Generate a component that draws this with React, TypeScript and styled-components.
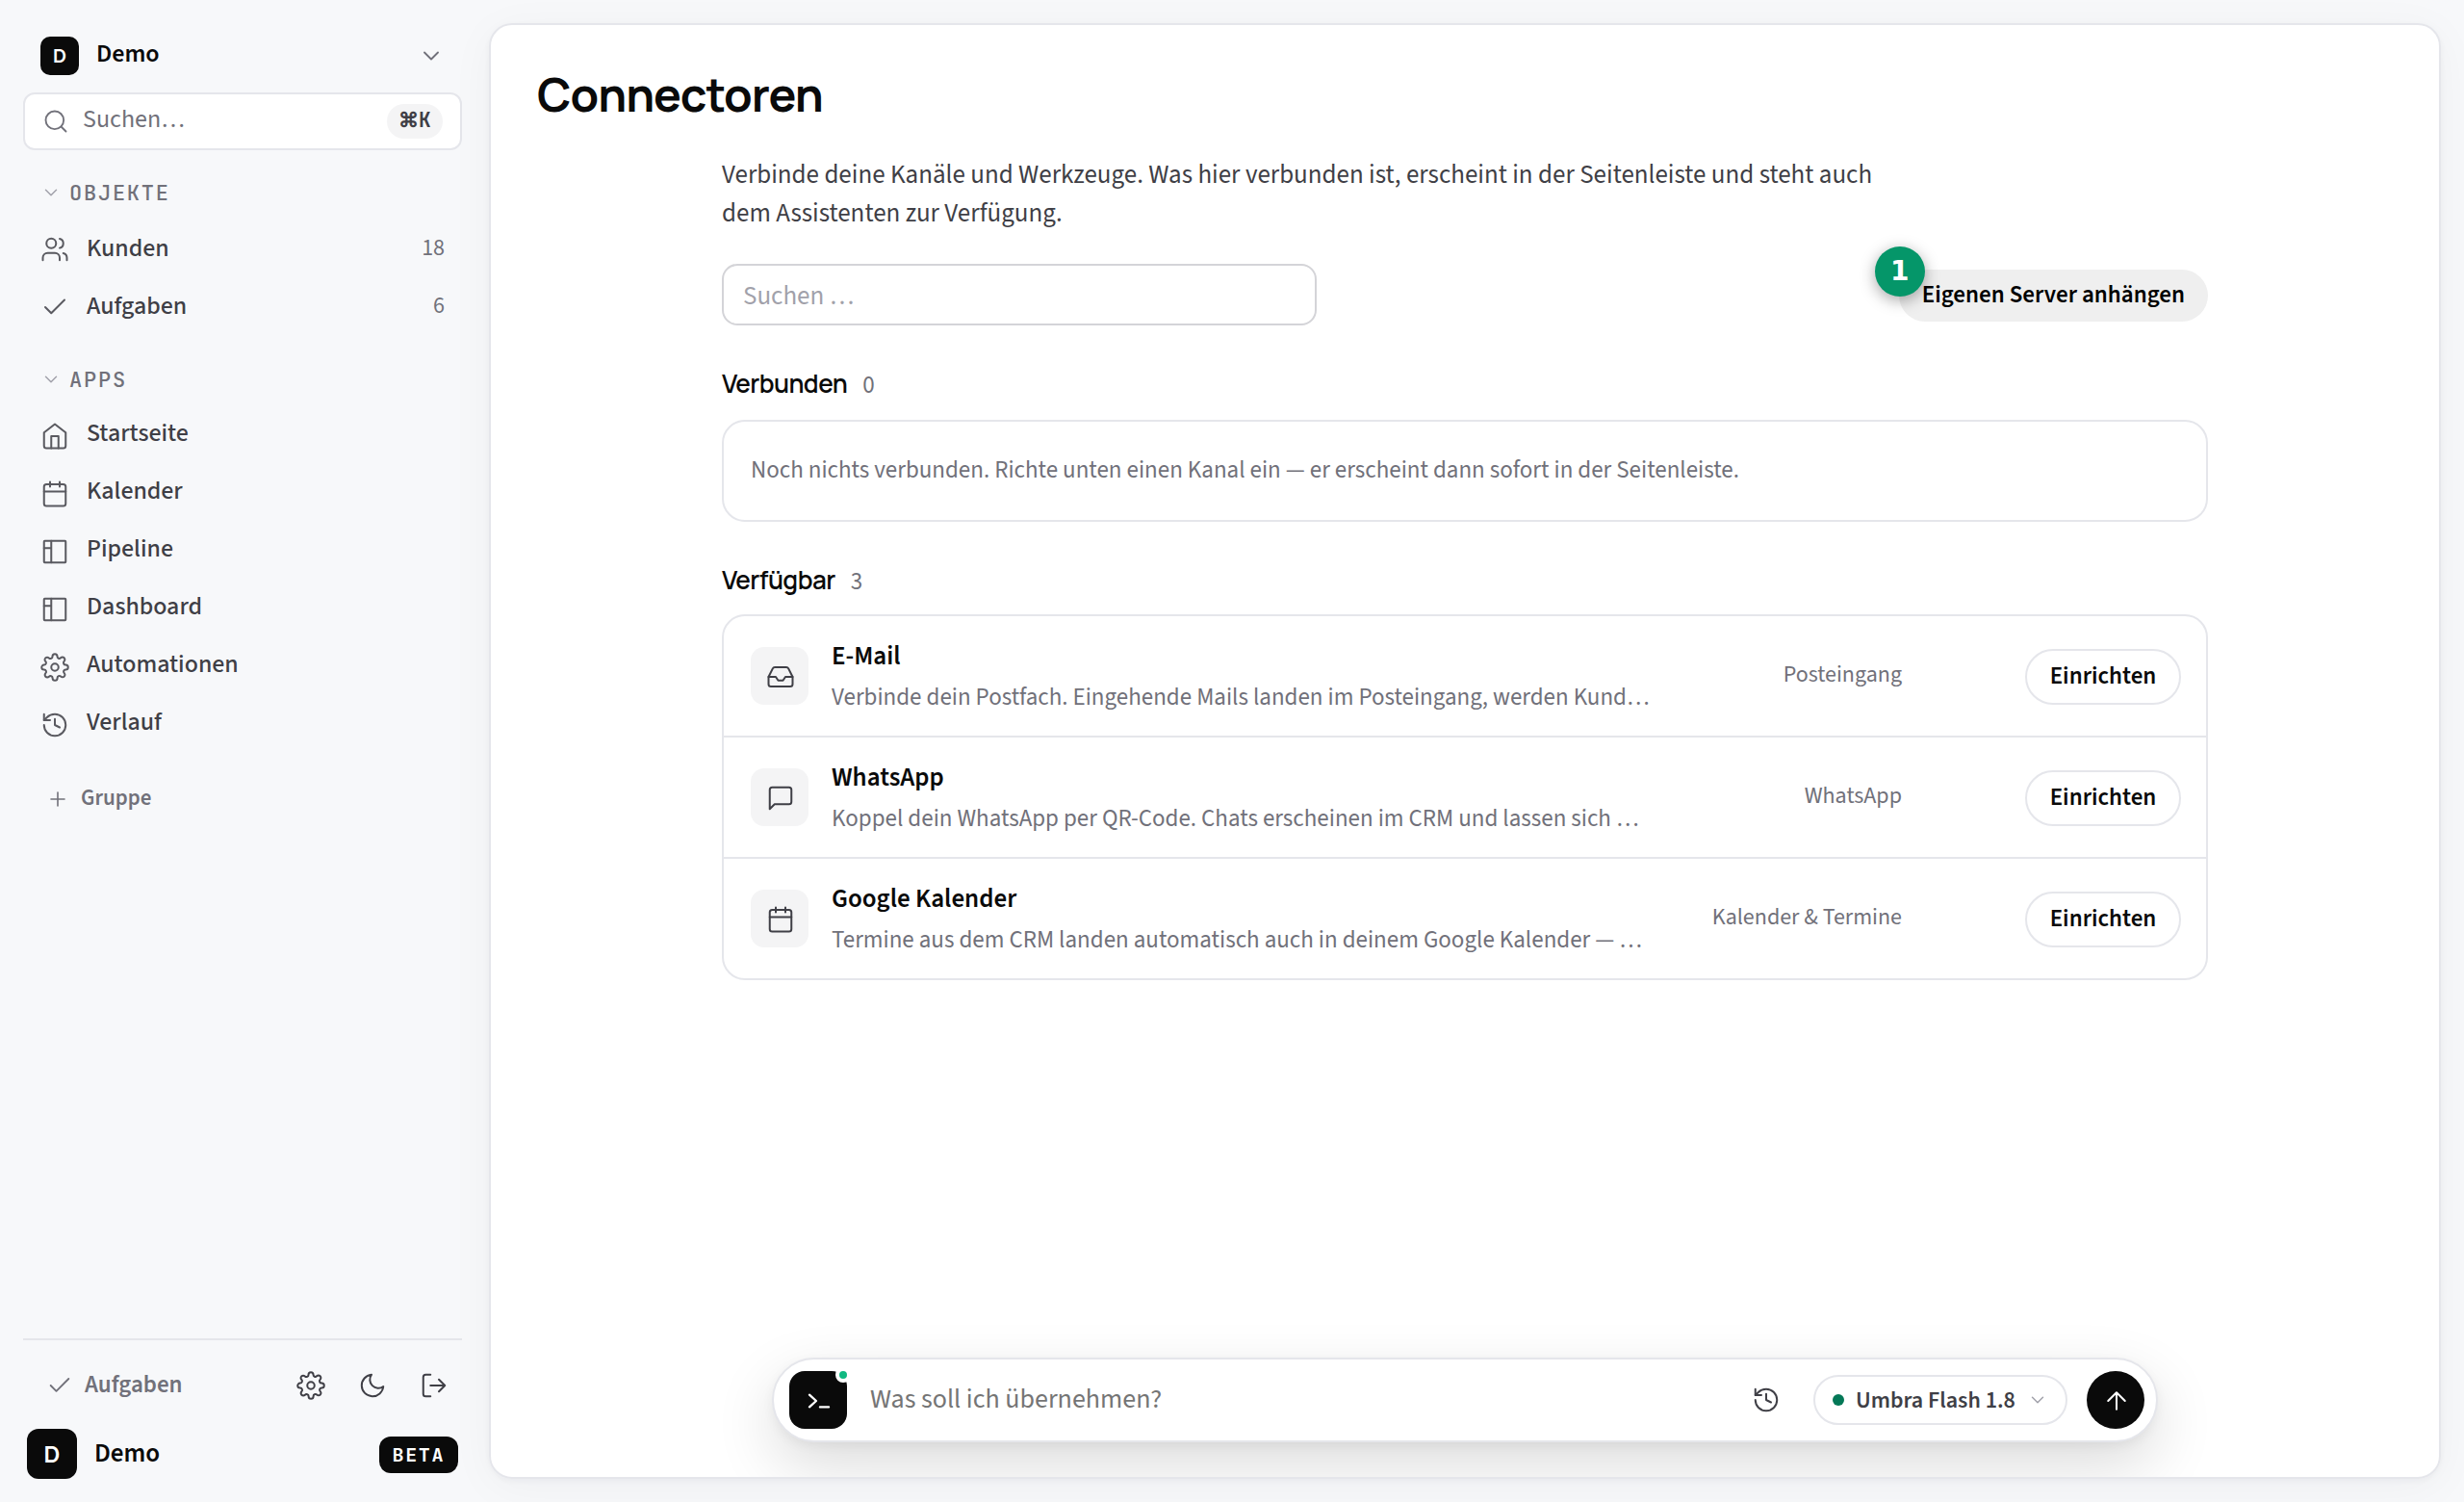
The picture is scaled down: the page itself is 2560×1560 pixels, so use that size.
import React from "react";
import styled, { createGlobalStyle } from "styled-components";

const sans = '"Source Sans 3", "Noto Sans CJK SC", sans-serif';
const display = 'Manrope, Inter, sans-serif';
const mono = '"JetBrains Mono", "Liberation Mono", monospace';
const c = { bg: "#f7f8fa", ink: "#0a0a0a", body: "#3f3f46", muted: "#71717a", faint: "#a1a1aa", line: "#e5e6eb", soft: "#f4f4f5" };

const Global = createGlobalStyle`
  *, *::before, *::after { box-sizing: border-box; }
  body { margin: 0; background: ${c.bg}; font-family: ${sans}; color: ${c.ink}; }
  button, input { font-family: inherit; margin: 0; }
  svg { display: block; flex: none; }
`;

const paths: Record<string, React.ReactNode> = {
  chevron: <path d="m6 9 6 6 6-6" />,
  search: <><circle cx="11" cy="11" r="8" /><path d="m21 21-4.3-4.3" /></>,
  users: <><path d="M16 21v-2a4 4 0 0 0-4-4H6a4 4 0 0 0-4 4v2" /><circle cx="9" cy="7" r="4" /><path d="M22 21v-2a4 4 0 0 0-3-3.87" /><path d="M16 3.13a4 4 0 0 1 0 7.75" /></>,
  check: <path d="M20 6 9 17l-5-5" />,
  home: <><path d="m3 9 9-7 9 7v11a2 2 0 0 1-2 2H5a2 2 0 0 1-2-2z" /><path d="M9 22V12h6v10" /></>,
  calendar: <><rect x="3" y="4" width="18" height="18" rx="2" /><path d="M16 2v4M8 2v4M3 10h18" /></>,
  board: <><rect x="3" y="3" width="18" height="18" rx=".6" /><path d="M9 3v18M3 9h6" /></>,
  gear: <><circle cx="12" cy="12" r="3" /><path d="M19.4 15a1.65 1.65 0 0 0 .33 1.82l.06.06a2 2 0 0 1 0 2.83 2 2 0 0 1-2.83 0l-.06-.06a1.65 1.65 0 0 0-1.82-.33 1.65 1.65 0 0 0-1 1.51V21a2 2 0 0 1-2 2 2 2 0 0 1-2-2v-.09A1.65 1.65 0 0 0 9 19.4a1.65 1.65 0 0 0-1.82.33l-.06.06a2 2 0 0 1-2.83 0 2 2 0 0 1 0-2.83l.06-.06a1.65 1.65 0 0 0 .33-1.82 1.65 1.65 0 0 0-1.51-1H3a2 2 0 0 1-2-2 2 2 0 0 1 2-2h.09A1.65 1.65 0 0 0 4.6 9a1.65 1.65 0 0 0-.33-1.82l-.06-.06a2 2 0 0 1 0-2.83 2 2 0 0 1 2.83 0l.06.06a1.65 1.65 0 0 0 1.82.33H9a1.65 1.65 0 0 0 1-1.51V3a2 2 0 0 1 2-2 2 2 0 0 1 2 2v.09a1.65 1.65 0 0 0 1 1.51 1.65 1.65 0 0 0 1.82-.33l.06-.06a2 2 0 0 1 2.83 0 2 2 0 0 1 0 2.83l-.06.06a1.65 1.65 0 0 0-.33 1.82V9a1.65 1.65 0 0 0 1.51 1H21a2 2 0 0 1 2 2 2 2 0 0 1-2 2h-.09a1.65 1.65 0 0 0-1.51 1z" /></>,
  history: <><path d="M3 12a9 9 0 1 0 9-9 9.75 9.75 0 0 0-6.74 2.74L3 8" /><path d="M3 3v5h5M12 7v5l4 2" /></>,
  plus: <path d="M5 12h14M12 5v14" />,
  moon: <path d="M21 12.79A9 9 0 1 1 11.21 3 7 7 0 0 0 21 12.79z" />,
  logout: <><path d="M9 21H5a2 2 0 0 1-2-2V5a2 2 0 0 1 2-2h4" /><path d="m16 17 5-5-5-5M21 12H9" /></>,
  inbox: <><path d="M22 12h-6l-2 3h-4l-2-3H2" /><path d="M5.45 5.11 2 12v6a2 2 0 0 0 2 2h16a2 2 0 0 0 2-2v-6l-3.45-6.89A2 2 0 0 0 16.76 4H7.24a2 2 0 0 0-1.79 1.11z" /></>,
  chat: <path d="M21 15a2 2 0 0 1-2 2H7l-4 4V5a2 2 0 0 1 2-2h14a2 2 0 0 1 2 2z" />,
  up: <path d="M12 19V5M5 12l7-7 7 7" />,
  prompt: <path d="m3.4 6.6 6 5.4-6 5.4M12.8 17.4h7.8" />,
};
function Icon({ name, size = 30, color = "currentColor", weight = 1.6 }: { name: string; size?: number; color?: string; weight?: number }) {
  return <svg width={size} height={size} viewBox="0 0 24 24" fill="none" stroke={color} strokeWidth={weight} strokeLinecap="round" strokeLinejoin="round">{paths[name]}</svg>;
}

const Shell = styled.div`display: flex; width: 2560px; height: 1560px; padding: 24px 24px 24px 0; overflow: hidden; background: ${c.bg};`;
const Sidebar = styled.aside`display: flex; flex-direction: column; width: 508px; padding: 0 28px 0 24px; flex: none;`;
const Workspace = styled.div`display: flex; align-items: center; height: 68px; padding: 0 18px; gap: 18px;`;
const Monogram = styled.div<{ $s: number; $f: number; $r: number }>`
  display: flex; align-items: center; justify-content: center; flex: none;
  width: ${p => p.$s}px; height: ${p => p.$s}px; border-radius: ${p => p.$r}px;
  background: ${c.ink}; color: #fff; font: 700 ${p => p.$f}px/1 ${display};
`;
const Name = styled.span<{ $lift?: number; $f?: number }>`flex: 1; font-size: ${p => p.$f ?? 27}px; font-weight: 600; line-height: 1; padding-bottom: ${p => p.$lift ?? 0}px;`;
const QuickSearch = styled.div`
  display: flex; align-items: center; gap: 14px; height: 60px; margin-top: 4px; padding: 0 18px;
  background: #fff; border: 2px solid ${c.line}; border-radius: 12px; color: ${c.muted}; font-size: 26px; line-height: 1;
`;
const QuickLabel = styled.span`flex: 1; padding-bottom: 4px;`;
const Kbd = styled.kbd`
  display: block; width: 58px; height: 36px; padding-left: 12px; border-radius: 18px;
  background: ${c.soft}; color: ${c.body}; font: 600 21px/33px "JetBrains Mono", monospace; white-space: nowrap; overflow: hidden;
`;
const CommandKey = styled.span`font-family: Roboto, "Noto Sans Math", sans-serif;`;
const Group = styled.section<{ $top: number }>`display: flex; flex-direction: column; margin-top: ${p => p.$top}px;`;
const GroupHead = styled.div`
  display: flex; align-items: center; gap: 8px; height: 32px; padding-left: 18px; color: ${c.muted};
  font: 500 22px/1 ${mono}; letter-spacing: 0.08em;
  & > span { padding-top: 2px; }
`;
const NavRow = styled.a<{ $lift: number }>`
  display: flex; align-items: center; gap: 18px; height: 60px; padding: 0 18px 0 18px; color: ${c.body};
  font-size: 26px; font-weight: 500; line-height: 1;
  & > span { padding-bottom: ${p => p.$lift}px; }
  & > svg { opacity: 0.85; }
`;
const NavLabel = styled.span`flex: 1;`;
const Count = styled.span`font-size: 24px; font-weight: 400; color: ${c.muted};`;
const AddGroup = styled.div`
  display: flex; align-items: center; gap: 12px; height: 48px; margin-top: 23px; padding-left: 24px;
  color: ${c.muted}; font-size: 23px; font-weight: 600; line-height: 1;
  & > span { padding-bottom: 3px; }
`;
const Foot = styled.div`margin-top: auto; border-top: 2px solid ${c.line};`;
const Tools = styled.div`display: flex; align-items: center; height: 60px; margin: 17px -1px 0 0; padding-left: 24px; gap: 4px; color: ${c.body};`;
const TaskLink = styled.span`display: flex; align-items: center; gap: 12px; flex: 1; color: ${c.muted}; font-size: 25px; font-weight: 600; line-height: 1; & > span { padding-bottom: 1px; }`;
const ToolButton = styled.span`display: flex; align-items: center; justify-content: center; width: 60px; height: 60px;`;
const User = styled.div`display: flex; align-items: center; gap: 18px; height: 52px; margin-top: 15px; padding: 0 4px;`;
const Beta = styled.span`
  display: flex; align-items: center; height: 38px; margin-top: 2px; padding: 0 14px; border-radius: 12px; background: ${c.ink}; color: #fff;
  font: 600 20px/1 ${mono}; letter-spacing: 0.08em;
`;

const Main = styled.main`
  display: flex; flex-direction: column; flex: 1; min-width: 0;
  background: #fff; border: 2px solid ${c.line}; border-radius: 24px; overflow: hidden;
`;
const MainShadow = styled.div`
  display: flex; flex: 1; min-width: 0; border-radius: 24px;
  box-shadow: 0 2px 6px rgba(15, 23, 42, 0.04), 0 8px 48px rgba(15, 23, 42, 0.04);
`;
const Title = styled.h1`margin: 39px 0 0 48px; font: 700 48px/66px ${display}; letter-spacing: -0.02em;`;
const Column = styled.div`display: flex; flex-direction: column; width: 1544px; margin: 31px auto 0;`;
const Lead = styled.p`margin: 0; width: 1240px; font-size: 27px; line-height: 40px; color: ${c.body};`;
const Bar = styled.div`display: flex; justify-content: space-between; align-items: center; margin-top: 32px; height: 64px;`;
const Filter = styled.input`
  width: 618px; height: 64px; padding: 2px 20px 0; border: 2px solid #d4d4d8; border-radius: 16px; background: #fff; font-size: 27px; outline: none;
  &::placeholder { color: ${c.faint}; opacity: 1; }
`;
const Attach = styled.button`
  position: relative; height: 54px; margin-top: 2px; padding: 0 24px 2px; border: 0; border-radius: 27px;
  background: #efefef; color: #000; font-size: 25px; font-weight: 600; line-height: 1;
`;
const Marker = styled.span`
  position: absolute; left: -25px; top: -24px; display: flex; align-items: center; justify-content: center; width: 52px; height: 52px;
  border-radius: 50%; background: #059669; color: #fff; font: 700 28px/1 "DejaVu Sans", sans-serif; box-shadow: 0 4px 16px rgba(0, 0, 0, 0.35);
`;
const SectionHead = styled.h2<{ $top: number }>`
  display: flex; align-items: baseline; gap: 16px; height: 36px; margin: ${p => p.$top}px 0 0; font: 600 26px/36px ${display}; letter-spacing: -0.02em;
  & > small { font: 400 25px/36px ${sans}; letter-spacing: 0; color: ${c.muted}; }
`;
const Empty = styled.div`
  display: flex; align-items: center; height: 106px; margin-top: 20px; padding: 0 28px 2px; border: 2px solid ${c.line}; border-radius: 24px;
  font-size: 25px; color: ${c.muted};
`;
const List = styled.div`display: flex; flex-direction: column; margin-top: 18px; border: 2px solid ${c.line}; border-radius: 24px;`;
const Row = styled.div`
  display: flex; align-items: center; height: 126px; padding: 0 26px 0 28px; border-bottom: 2px solid ${c.line};
  &:last-child { height: 124px; border-bottom: 0; }
`;
const Tile = styled.div`display: flex; align-items: center; justify-content: center; width: 60px; height: 60px; padding: 2px 0 0 2px; border-radius: 14px; background: ${c.soft}; color: ${c.body};`;
const Info = styled.div`display: flex; flex-direction: column; flex: 1; margin-left: 24px; min-width: 0;`;
const RowTitle = styled.div`font-size: 27px; font-weight: 600; line-height: 40px;`;
const RowText = styled.div`font-size: 25px; line-height: 38px; margin-top: 3px; color: ${c.muted}; white-space: nowrap;`;
const Kind = styled.div`width: 240px; padding-bottom: 4px; text-align: right; font-size: 24px; color: ${c.muted}; white-space: nowrap;`;
const Setup = styled.button`
  width: 162px; height: 58px; margin: 2px 0 0 128px; padding: 0 0 2px; border: 2px solid ${c.line}; border-radius: 29px; background: #fff;
  color: ${c.ink}; font-size: 25px; font-weight: 600; line-height: 1;
`;
const Composer = styled.div`
  display: flex; align-items: center; width: 1440px; height: 88px; margin: auto auto 36px; padding: 0 12px 0 16px;
  background: #fff; border: 2px solid ${c.line}; border-radius: 44px;
  box-shadow: 0 4px 12px rgba(0, 0, 0, 0.05), 0 24px 64px rgba(0, 0, 0, 0.14);
`;
const Terminal = styled.div`
  position: relative; display: flex; align-items: center; justify-content: center; width: 60px; height: 60px; padding: 2px 0 0 2px;
  border-radius: 16px; background: ${c.ink}; color: #fff;
  &::after { content: ""; position: absolute; top: -4px; right: -4px; width: 16px; height: 16px; border-radius: 50%; background: #10b981; border: 4px solid #fff; }
`;
const Ask = styled.input`
  flex: 1; height: 60px; margin-left: 24px; padding: 0 0 2px; border: 0; background: none; outline: none; font-size: 28px;
  &::placeholder { color: #757575; opacity: 1; }
`;
const Model = styled.div`
  display: flex; align-items: center; gap: 12px; width: 264px; height: 52px; margin: 0 20px 0 34px; padding: 0 18px; white-space: nowrap;
  border: 2px solid ${c.line}; border-radius: 26px; color: ${c.body}; font-size: 24px; font-weight: 600; line-height: 1;
  &::before { content: ""; flex: none; width: 12px; height: 12px; border-radius: 50%; background: #047857; }
  & > span { padding-top: 1px; }
`;
const Send = styled.button`display: flex; align-items: center; justify-content: center; width: 60px; height: 60px; padding: 2px 0 0 2px; border: 0; border-radius: 50%; background: ${c.ink}; color: #fff;`;

const objects = [["users", "Kunden", "18"], ["check", "Aufgaben", "6"]];
const apps = [["home", "Startseite"], ["calendar", "Kalender"], ["board", "Pipeline"], ["board", "Dashboard"], ["gear", "Automationen"], ["history", "Verlauf"]];
const connectors = [
  ["inbox", "E-Mail", "Verbinde dein Postfach. Eingehende Mails landen im Posteingang, werden Kund…", "Posteingang"],
  ["chat", "WhatsApp", "Koppel dein WhatsApp per QR-Code. Chats erscheinen im CRM und lassen sich …", "WhatsApp"],
  ["calendar", "Google Kalender", "Termine aus dem CRM landen automatisch auch in deinem Google Kalender — …", "Kalender & Termine"],
];

export default function App() {
  return (
    <>
      <Global />
      <Shell>
        <Sidebar>
          <Workspace>
            <Monogram $s={40} $f={20} $r={10}>D</Monogram>
            <Name $lift={4} $f={26}>Demo</Name>
            <Icon name="chevron" size={28} color={c.muted} />
          </Workspace>
          <QuickSearch>
            <Icon name="search" size={28} />
            <QuickLabel>Suchen…</QuickLabel>
            <Kbd><CommandKey>⌘</CommandKey>K</Kbd>
          </QuickSearch>
          <Group $top={28}>
            <GroupHead><Icon name="chevron" size={22} color={c.faint} /><span>OBJEKTE</span></GroupHead>
            <Group $top={13}>
              {objects.map(([i, l, n]) => <NavRow key={l} $lift={3}><Icon name={i} /><NavLabel>{l}</NavLabel><Count>{n}</Count></NavRow>)}
            </Group>
          </Group>
          <Group $top={29}>
            <GroupHead><Icon name="chevron" size={22} color={c.faint} /><span>APPS</span></GroupHead>
            <Group $top={13}>
              {apps.map(([i, l]) => <NavRow key={l} $lift={7}><Icon name={i} /><NavLabel>{l}</NavLabel></NavRow>)}
            </Group>
          </Group>
          <AddGroup><Icon name="plus" size={24} /><span>Gruppe</span></AddGroup>
          <Foot>
            <Tools>
              <TaskLink><Icon name="check" size={28} /><span>Aufgaben</span></TaskLink>
              <ToolButton><Icon name="gear" /></ToolButton>
              <ToolButton><Icon name="moon" /></ToolButton>
              <ToolButton><Icon name="logout" /></ToolButton>
            </Tools>
            <User>
              <Monogram $s={52} $f={24} $r={12}>D</Monogram>
              <Name $lift={2}>Demo</Name>
              <Beta>BETA</Beta>
            </User>
          </Foot>
        </Sidebar>
        <MainShadow>
          <Main>
            <Title>Connectoren</Title>
            <Column>
              <Lead>Verbinde deine Kanäle und Werkzeuge. Was hier verbunden ist, erscheint in der Seitenleiste und steht auch dem Assistenten zur Verfügung.</Lead>
              <Bar>
                <Filter placeholder="Suchen …" />
                <Attach>Eigenen Server anhängen<Marker>1</Marker></Attach>
              </Bar>
              <SectionHead $top={42}>Verbunden<small>0</small></SectionHead>
              <Empty>Noch nichts verbunden. Richte unten einen Kanal ein — er erscheint dann sofort in der Seitenleiste.</Empty>
              <SectionHead $top={42}>Verfügbar<small>3</small></SectionHead>
              <List>
                {connectors.map(([i, t, d, k]) => (
                  <Row key={t}>
                    <Tile><Icon name={i} /></Tile>
                    <Info><RowTitle>{t}</RowTitle><RowText>{d}</RowText></Info>
                    <Kind>{k}</Kind>
                    <Setup>Einrichten</Setup>
                  </Row>
                ))}
              </List>
            </Column>
            <Composer>
              <Terminal><Icon name="prompt" size={28} weight={2} /></Terminal>
              <Ask placeholder="Was soll ich übernehmen?" />
              <Icon name="history" color={c.body} />
              <Model><span>Umbra Flash 1.8</span><Icon name="chevron" size={22} color={c.faint} /></Model>
              <Send><Icon name="up" /></Send>
            </Composer>
          </Main>
        </MainShadow>
      </Shell>
    </>
  );
}
